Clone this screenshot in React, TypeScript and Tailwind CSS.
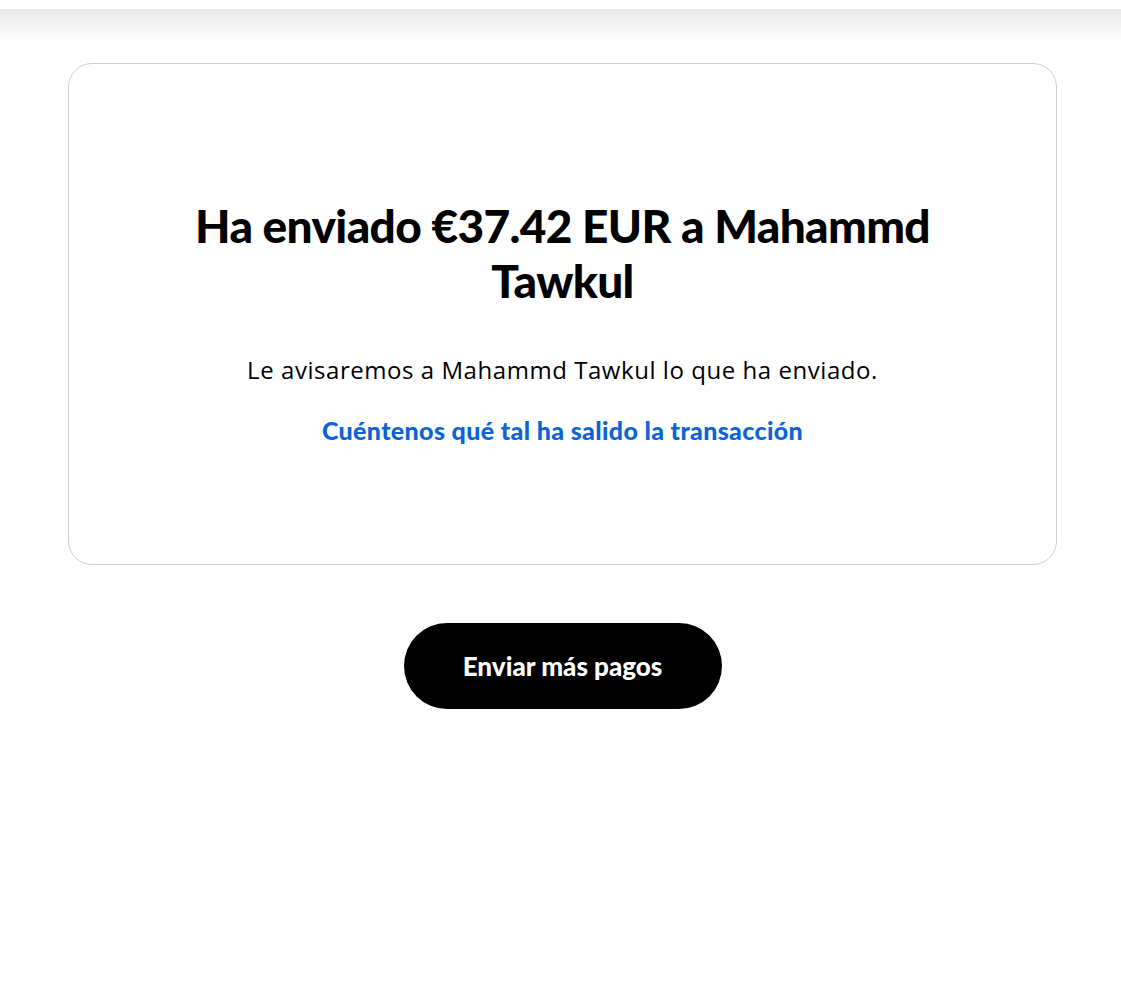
import React from 'react';

const App: React.FC = () => {
    return (
        <div className="min-h-[984px] bg-white" style={{ fontFamily: '"Open Sans", "Liberation Sans", Arial, sans-serif' }}>
            {/* sombra de la cabecera */}
            <div className="h-[9px] bg-white" />
            <div className="h-[30px] bg-gradient-to-b from-[#e6e6e6] to-white" />

            <div className="ml-[68px] mr-[64px] mt-[24px] h-[502px] rounded-[24px] border border-[#cfcfcf] flex flex-col items-center pt-[134px]">
                <h1
                    className="max-w-[800px] text-center text-[46px] leading-[55px] font-black text-black tracking-[-0.65px]"
                    style={{ fontFamily: 'Lato, "Noto Sans", sans-serif' }}
                >
                    Ha enviado €37.42 EUR a Mahammd Tawkul
                </h1>
                <p className="mt-[47px] text-[24px] leading-[30px] text-black tracking-[0.55px]">
                    Le avisaremos a Mahammd Tawkul lo que ha enviado.
                </p>
                <a
                    href="#"
                    className="mt-[30px] text-[25px] leading-[30px] font-black text-[#0b63d6] tracking-[0.35px]"
                    style={{ fontFamily: 'Lato, "Noto Sans", sans-serif' }}
                >
                    Cuéntenos qué tal ha salido la transacción
                </a>
            </div>

            <div className="flex justify-center mt-[58px] pl-[4px]">
                <button
                    className="w-[318px] h-[86px] rounded-full bg-black text-white text-[26px] font-black"
                    style={{ fontFamily: 'Lato, "Noto Sans", sans-serif' }}
                >
                    Enviar más pagos
                </button>
            </div>
        </div>
    );
};

export default App;
